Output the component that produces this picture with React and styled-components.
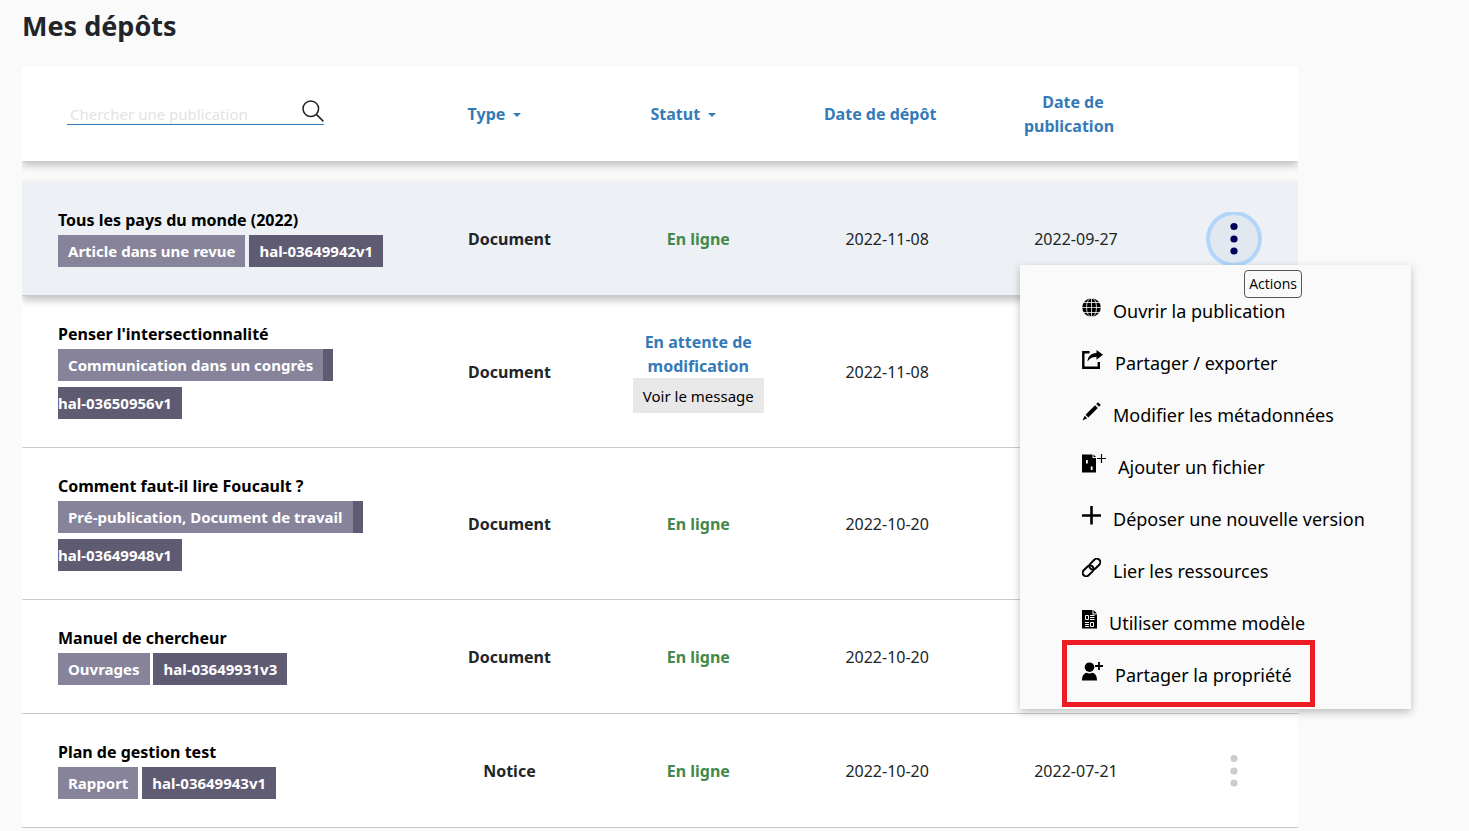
import styled, { createGlobalStyle } from "styled-components"

const EstilosGlobais = createGlobalStyle`
    * {
        box-sizing: border-box;
    }
    body {
        margin: 0;
        background: #fafafa;
        color: #212529;
        font-family: "Noto Sans", sans-serif;
        font-size: 16px;
        line-height: 24px;
    }
    button, input {
        font-family: inherit;
    }
`

const Page = styled.main`
    height: 100vh;
    overflow: hidden;
    padding: 6px 171px 0 22px;
`

const Title = styled.h1`
    margin: 0 0 21px;
    font-size: 27px;
    line-height: 40px;
    font-weight: 700;
`

const ListArea = styled.div`
    position: relative;
`

const TableClip = styled.div`
    overflow: hidden;
`

const Table = styled.table`
    width: 100%;
    table-layout: fixed;
    border-spacing: 0;

    tbody::before {
        content: "";
        display: block;
        height: 21px;
    }
`

const Col = styled.col`
    width: ${({ $width }) => $width};
`

const HeadRow = styled.tr`
    height: 94px;
    background: #fff;
    box-shadow: 0 4px 8px rgba(0, 0, 0, 0.25);
`

const HeadCell = styled.th`
    padding: 0 ${({ $end }) => $end || "0"} 0 0;
    color: #337ab7;
    font-weight: 700;
    vertical-align: middle;
    text-align: center;
`

const SearchBox = styled.div`
    display: flex;
    align-items: center;
    height: 28px;
    margin: 0 91px 6px 45px;
    border-bottom: 1px solid #337ab7;

    svg {
        flex: none;
        color: #222;
    }
`

const SearchInput = styled.input`
    flex: 1;
    min-width: 0;
    height: 26px;
    border: 0;
    padding: 6px 3px 0;
    background: transparent;
    font-size: 15px;
    line-height: 20px;
    outline: none;

    &::placeholder {
        color: #e3e3e3;
        opacity: 1;
    }
`

const HeadButton = styled.button`
    padding: 0;
    border: 0;
    background: none;
    color: inherit;
    font-size: 16px;
    line-height: 24px;
    font-weight: 700;
`

const Caret = styled.span`
    display: inline-block;
    margin-left: 8px;
    vertical-align: 3px;
    border-top: 4px solid;
    border-left: 4px solid transparent;
    border-right: 4px solid transparent;
`

const SortSpace = styled.span`
    display: inline-block;
    width: 8px;
`

const Row = styled.tr`
    background: ${({ $active }) => ($active ? "#edf1f6" : "#fff")};
    ${({ $active }) => $active && "position: relative; box-shadow: 0 4px 8px rgba(0, 0, 0, 0.25);"}
`

const Cell = styled.td`
    padding: 0;
    border-bottom: 1px solid #c8cbce;
    text-align: center;
    vertical-align: middle;
    font-weight: ${({ $bold }) => ($bold ? 700 : 400)};
`

const PublicationCell = styled(Cell)`
    padding: 26px 22px 25px 36px;
    text-align: left;
`

const PublicationTitle = styled.a`
    display: block;
    color: #000;
    font-weight: 700;
    text-decoration: none;
`

const Badges = styled.div`
    font-size: 15px;
    line-height: 38px;
    white-space: nowrap;
`

const Badge = styled.span`
    padding: 6px 10px;
    background: ${({ $dark }) => ($dark ? "#5f5b73" : "#86839b")};
    color: #fff;
    font-weight: 700;
`

const Status = styled.div`
    padding: 0 24px;
    color: ${({ $waiting }) => ($waiting ? "#337ab7" : "#43894a")};
    font-weight: 700;
`

const MessageButton = styled.button`
    display: block;
    height: 35px;
    margin: 0 auto;
    padding: 0 10px;
    border: 0;
    background: #e8e8e8;
    color: #000;
    font-size: 15px;
    line-height: 24px;
`

const DotsClip = styled.div`
    display: flex;
    align-items: center;
    justify-content: center;
    height: 54px;
    overflow: hidden;
`

const DotsButton = styled.button`
    flex: none;
    width: 48px;
    height: 48px;
    padding: 0;
    border: 0;
    border-radius: 50%;
    background: ${({ $active }) => ($active ? "#e1e8f0" : "transparent")};
    box-shadow: ${({ $active }) => ($active ? "0 0 0 4px #b1d5fb" : "none")};
    color: ${({ $active }) => ($active ? "#00005c" : "#ccc")};

    svg {
        display: block;
        margin: 0 auto;
    }
`

const Menu = styled.ul`
    position: absolute;
    top: 198px;
    right: -113px;
    width: 391px;
    margin: 0;
    padding: 20px 0 8px;
    list-style: none;
    background: #fafafa;
    box-shadow: 0 3px 8px rgba(0, 0, 0, 0.25);
`

const MenuItem = styled.li`
    position: relative;
`

const MenuLink = styled.a`
    display: flex;
    align-items: center;
    gap: 12px;
    height: 52px;
    padding-left: 62px;
    color: #000;
    font-size: 18px;
    line-height: 28px;
    text-decoration: none;
    white-space: nowrap;

    svg {
        flex: none;
        margin-bottom: 8px;
    }
`

const Highlight = styled.span`
    position: absolute;
    top: -9px;
    left: 42px;
    width: 253px;
    height: 67px;
    border: 5px solid #ed1c24;
    pointer-events: none;
`

const Tooltip = styled.div`
    position: absolute;
    top: 203px;
    right: -4px;
    padding: 1px 4px;
    border: 1px solid #575757;
    border-radius: 4px;
    background: #f9f9f9;
    color: #000;
    font-family: "Open Sans", sans-serif;
    font-size: 14px;
`

const SearchIcon = () => (
    <svg width="22" height="22" viewBox="0 0 22 22" fill="none" stroke="currentColor" strokeWidth="1.5" aria-hidden="true">
        <circle cx="8.8" cy="8.8" r="7.8" />
        <path d="M14.4 14.4l7 7" />
    </svg>
)

const Icon = ({ width, children }) => (
    <svg width={width} height="19" viewBox={`0 0 ${width} 19`} fill="currentColor" aria-hidden="true">
        {children}
    </svg>
)

const GlobeIcon = () => (
    <Icon width={19}>
        <circle cx="9.5" cy="9.5" r="9.3" />
        <g fill="none" stroke="#fafafa" strokeWidth="0.8">
            <ellipse cx="9.5" cy="9.5" rx="5" ry="9.5" />
            <path d="M9.5 0v19M0 9.5h19M1.5 4.500h16M1.5 14.500h16" />
        </g>
    </Icon>
)

const ShareIcon = () => (
    <Icon width={21}>
        <path d="M7.5 2.200H1.300v15.500h15.500V12" fill="none" stroke="currentColor" strokeWidth="2.4" />
        <path d="M14.5 0L21 4.800l-6.500 5V7C10.500 6.800 8 8 5.500 11.500 5.800 6.500 9 3.300 14.500 3z" />
    </Icon>
)

const PencilIcon = () => (
    <Icon width={19}>
        <path d="M13 3.200l2.800 2.800L6.300 15.500l-2.800-2.800zM14.200 2L16 .200l2.800 2.800L17 4.800zM2.700 13.800l2.500 2.500L.500 18.500z" />
    </Icon>
)

const FileIcon = () => (
    <Icon width={24}>
        <path fillRule="evenodd" d="M0 .500h10.500v3.500H14V18.500H0zM4 6v3.500h1.800V6zM8.800 12.500v3.500h1.800v-3.500z" />
        <path d="M11.500 0.500l2.500 2.500h-2.500z" />
        <path d="M19.500 0v9M15 4.500h9" stroke="currentColor" strokeWidth="1.200" />
    </Icon>
)

const PlusIcon = () => (
    <Icon width={19}>
        <path d="M9.500 0v18.500M0 9.500h19" stroke="currentColor" strokeWidth="2.600" />
    </Icon>
)

const LinkIcon = () => (
    <Icon width={19}>
        <g fill="none" stroke="currentColor" strokeWidth="2" transform="rotate(-45 9.500 9.500)">
            <rect x="-1.500" y="6" width="12.500" height="7" rx="3.500" />
            <rect x="8" y="6" width="12.500" height="7" rx="3.500" />
        </g>
    </Icon>
)

const ModelIcon = () => (
    <Icon width={15}>
        <path d="M0 0h10.500v4.500H15V18.500H0zM11.500 0L15 3.500h-3.500z" />
        <g fill="none" stroke="#fafafa" strokeWidth="1">
            <path d="M3.500 5.500h3v4h-3zM8.500 12.500h3v4h-3zM8 5.500h4.500M8 7.500h4.500M8 9.500h4.500M3 12.500h4M3 14.500h4M3 16.500h4" />
        </g>
    </Icon>
)

const UserIcon = () => (
    <Icon width={21}>
        <circle cx="7.500" cy="5.200" r="4.800" />
        <path d="M0 18.500c0-5 2-7 4.500-7.800 2 1 4 1 6 0 2.500.800 4.500 2.800 4.500 7.800z" />
        <path d="M17 0v8M13 4h8" stroke="currentColor" strokeWidth="1.800" />
    </Icon>
)

const actions = [
    { label: "Ouvrir la publication", Dessin: GlobeIcon },
    { label: "Partager / exporter", Dessin: ShareIcon },
    { label: "Modifier les métadonnées", Dessin: PencilIcon },
    { label: "Ajouter un fichier", Dessin: FileIcon },
    { label: "Déposer une nouvelle version", Dessin: PlusIcon },
    { label: "Lier les ressources", Dessin: LinkIcon },
    { label: "Utiliser comme modèle", Dessin: ModelIcon },
    { label: "Partager la propriété", Dessin: UserIcon, highlighted: true },
]

const deposits = [
    { id: "hal-03649942v1", title: "Tous les pays du monde (2022)", kind: "Article dans une revue", type: "Document", deposited: "2022-11-08", published: "2022-09-27", active: true },
    { id: "hal-03650956v1", title: "Penser l'intersectionnalité", kind: "Communication dans un congrès", type: "Document", deposited: "2022-11-08", waiting: true, split: true },
    { id: "hal-03649948v1", title: "Comment faut-il lire Foucault ?", kind: "Pré-publication, Document de travail", type: "Document", deposited: "2022-10-20", split: true },
    { id: "hal-03649931v3", title: "Manuel de chercheur", kind: "Ouvrages", type: "Document", deposited: "2022-10-20" },
    { id: "hal-03649943v1", title: "Plan de gestion test", kind: "Rapport", type: "Notice", deposited: "2022-10-20", published: "2022-07-21" },
]

const DepositRow = ({ deposit }) => (
    <Row $active={deposit.active}>
        <PublicationCell>
            <PublicationTitle href="#">{deposit.title}</PublicationTitle>
            <Badges>
                <Badge>{deposit.kind}</Badge>
                {!deposit.split && " "}
                <Badge $dark>
                    {deposit.split && <br />}
                    {deposit.id}
                </Badge>
            </Badges>
        </PublicationCell>
        <Cell $bold>{deposit.type}</Cell>
        <Cell>
            <Status $waiting={deposit.waiting}>
                {deposit.waiting ? "En attente de modification" : "En ligne"}
            </Status>
            {deposit.waiting && <MessageButton type="button">Voir le message</MessageButton>}
        </Cell>
        <Cell>{deposit.deposited}</Cell>
        <Cell>{deposit.published}</Cell>
        <Cell>
            <DotsClip>
                <DotsButton type="button" aria-label="Actions" $active={deposit.active}>
                    <svg width="8" height="34" viewBox="0 0 8 34" fill="currentColor">
                        <circle cx="4" cy="4.500" r="3.600" />
                        <circle cx="4" cy="17" r="3.600" />
                        <circle cx="4" cy="29" r="3.600" />
                    </svg>
                </DotsButton>
            </DotsClip>
        </Cell>
    </Row>
)

const App = () => {
    return (
        <Page>
            <EstilosGlobais />
            <Title>Mes dépôts</Title>
            <ListArea>
                <TableClip>
                    <Table>
                        <colgroup>
                            <Col />
                            <Col $width="14.8%" />
                            <Col $width="14.8%" />
                            <Col $width="14.8%" />
                            <Col $width="14.8%" />
                            <Col $width="10%" />
                        </colgroup>
                        <thead>
                            <HeadRow>
                                <HeadCell>
                                    <SearchBox>
                                        <SearchInput type="text" placeholder="Chercher une publication" aria-label="Chercher une publication" />
                                        <SearchIcon />
                                    </SearchBox>
                                </HeadCell>
                                <HeadCell $end="30px">
                                    <HeadButton type="button" aria-haspopup="listbox">Type<Caret /></HeadButton>
                                </HeadCell>
                                <HeadCell $end="30px">
                                    <HeadButton type="button" aria-haspopup="listbox">Statut<Caret /></HeadButton>
                                </HeadCell>
                                <HeadCell $end="6px">Date de dépôt<SortSpace /></HeadCell>
                                <HeadCell $end="6px">Date de<br />publication<SortSpace /></HeadCell>
                                <HeadCell as="td" />
                            </HeadRow>
                        </thead>
                        <tbody>
                            {deposits.map((deposit) => (
                                <DepositRow key={deposit.id} deposit={deposit} />
                            ))}
                        </tbody>
                    </Table>
                </TableClip>
                <Menu>
                    {actions.map(({ label, Dessin, highlighted }) => (
                        <MenuItem key={label}>
                            <MenuLink href="#">
                                <Dessin />
                                {label}
                            </MenuLink>
                            {highlighted && <Highlight />}
                        </MenuItem>
                    ))}
                </Menu>
                <Tooltip role="tooltip">Actions</Tooltip>
            </ListArea>
        </Page>
    )
}

export default App
